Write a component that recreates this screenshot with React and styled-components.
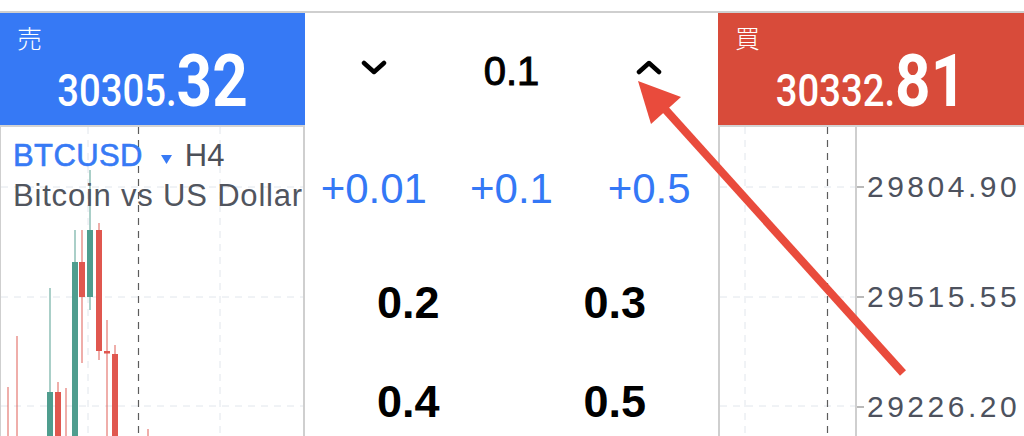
import React from "react";
import styled, { createGlobalStyle } from "styled-components";

const Global = createGlobalStyle`
  html, body { margin: 0; padding: 0; background: #fff; }
  body { font-family: "Liberation Sans", Arial, sans-serif; }
`;

const Page = styled.div`
  position: relative;
  width: 1024px;
  height: 436px;
  overflow: hidden;
  padding-top: 11px;
  box-sizing: border-box;
  background: #fff;
`;

const Frame = styled.div`
  display: grid;
  grid-template-columns: 305px 413px 1fr;
  grid-template-rows: 112px 1fr;
  height: 100%;
  border-top: 2px solid #cfcfcf;
  box-sizing: border-box;
`;

const QuoteBar = styled.div`
  grid-row: 1;
  grid-column: ${(p) => (p.$side === "sell" ? 1 : 3)};
  background: ${(p) => (p.$side === "sell" ? "#3679f5" : "#d84b3a")};
  color: #fff;
  padding-top: 12px;
  display: flex;
  flex-direction: column;
  overflow: hidden;
`;

const SideLabel = styled.div`
  margin-left: 17px;
  height: 26px;
  font: 300 25px/25px "Noto Sans CJK JP", "Noto Sans CJK SC", sans-serif;
`;

const Price = styled.div`
  display: flex;
  justify-content: center;
  align-items: baseline;
  line-height: 60px;
  font-family: Roboto, "Liberation Sans", sans-serif;
  transform: scaleX(0.85);
  transform-origin: center;
`;

const PriceMain = styled.span`
  font-size: 45px;
  font-weight: 500;
`;

const PricePips = styled.span`
  font-size: 73px;
  font-weight: 700;
`;

const Ticket = styled.div`
  grid-column: 2;
  grid-row: 1 / span 2;
  display: flex;
  flex-direction: column;
  background: #fff;
`;

const StepRow = styled.div`
  height: 112px;
  flex: none;
  display: grid;
  grid-template-columns: repeat(3, 1fr);
  align-items: center;
  justify-items: center;
`;

const StepButton = styled.div`
  display: flex;
  margin-bottom: 3px;
`;

const VolumeValue = styled.div`
  font: 400 40px/1 "Liberation Sans", Arial, sans-serif;
  -webkit-text-stroke: 1px #000;
  color: #000;
  padding-top: 4px;
`;

const QuickRow = styled.div`
  height: 128px;
  flex: none;
  display: grid;
  grid-template-columns: repeat(3, 1fr);
  align-items: center;
  justify-items: center;
`;

const QuickAdd = styled.div`
  font: 400 42px/1 "Liberation Sans", Arial, sans-serif;
  color: #3478f6;
`;

const PresetRow = styled.div`
  height: 99px;
  flex: none;
  display: grid;
  grid-template-columns: repeat(2, 1fr);
  align-items: center;
  justify-items: center;
`;

const Preset = styled.div`
  font: 700 45px/1 "Liberation Sans", Arial, sans-serif;
  color: #000;
`;

const Chart = styled.div`
  grid-row: 2;
  grid-column: ${(p) => (p.$side === "left" ? 1 : 3)};
  position: relative;
  overflow: hidden;
  border-top: 2px solid #d3d3d3;
  border-left: ${(p) => (p.$side === "left" ? "1px" : "2px")} solid #cfcfcf;
  border-right: ${(p) => (p.$side === "left" ? "2px solid #cfcfcf" : "0")};
  display: flex;
`;

const ChartCanvas = styled.svg`
  position: absolute;
  inset: 0;
  width: 100%;
  height: 100%;
`;

const Header = styled.div`
  position: relative;
  padding: 9px 0 0 12px;
  font-size: 31px;
  line-height: 40px;
  white-space: nowrap;
`;

const SymbolLine = styled.div`
  display: flex;
  align-items: baseline;
`;

const Symbol = styled.span`
  color: #377af5;
  letter-spacing: 0.4px;
  -webkit-text-stroke: 0.6px #377af5;
`;

const Caret = styled.svg`
  margin: 6px 13px 0 18px;
  align-self: center;
`;

const Timeframe = styled.span`
  color: #4c5059;
`;

const Description = styled.div`
  color: #51555e;
  letter-spacing: 0.8px;
`;

const Plot = styled.div`
  position: relative;
  flex: 1;
`;

const Axis = styled.div`
  width: 169px;
  flex: none;
  box-sizing: border-box;
  border-left: 2px solid #cfcfcf;
  padding-top: 5px;
  display: flex;
  flex-direction: column;
`;

const AxisRow = styled.div`
  height: 110px;
  flex: none;
  display: flex;
  align-items: center;
`;

const Tick = styled.span`
  width: 7px;
  height: 2px;
  background: #b9b9b9;
  margin-right: 3px;
`;

const AxisLabel = styled.span`
  font: 400 30px/1 "Liberation Sans", Arial, sans-serif;
  letter-spacing: 3.5px;
  color: #4d525e;
`;

const Overlay = styled.svg`
  position: absolute;
  left: 0;
  top: 0;
  pointer-events: none;
`;

const GREEN = "#4f9d8e";
const RED = "#e0574f";

const candles = [
  { x: 8, wick: [387, 440], color: RED },
  { x: 17, wick: [336, 440], color: RED },
  { x: 50, wick: [288, 440], body: [392, 440], color: GREEN },
  { x: 58, wick: [382, 440], body: [392, 440], color: RED },
  { x: 66, wick: [388, 440], color: RED },
  { x: 75, wick: [230, 440], body: [262, 440], color: GREEN },
  { x: 82, wick: [230, 363], body: [262, 297], color: RED },
  { x: 90, wick: [170, 310], body: [230, 297], color: GREEN },
  { x: 99, wick: [223, 360], body: [230, 351], color: RED },
  { x: 107, wick: [320, 440], body: [351, 353.5], color: RED },
  { x: 115, wick: [345, 440], body: [354, 440], color: RED },
  { x: 148, wick: [429, 440], color: RED },
];

const hLines = [187, 297, 406];

function Chevron({ up }) {
  return (
    <svg width="26" height="15" viewBox="0 0 26 15">
      <polyline
        points={up ? "3,12 13,3 23,12" : "3,3 13,12 23,3"}
        fill="none"
        stroke="#000"
        strokeWidth="4.5"
        strokeLinecap="round"
        strokeLinejoin="round"
      />
    </svg>
  );
}

function LeftCanvas() {
  return (
    <ChartCanvas viewBox="1 127 302 309" preserveAspectRatio="none">
      {hLines.map((y) => (
        <line key={y} x1="1" x2="303" y1={y} y2={y} stroke="#e1e6ec" strokeWidth="1" strokeDasharray="7 6" />
      ))}
      {[88, 220].map((x) => (
        <line key={x} x1={x} x2={x} y1="127" y2="436" stroke="#e1e6ec" strokeWidth="1" strokeDasharray="7 6" />
      ))}
      <line x1="138.5" x2="138.5" y1="127" y2="436" stroke="#5c5c5c" strokeWidth="1.2" strokeDasharray="7 6" />
      {candles.map((c, i) => (
        <g key={i}>
          <line x1={c.x} x2={c.x} y1={c.wick[0]} y2={c.wick[1]} stroke={c.color} strokeWidth="1.2" opacity="0.8" />
          {c.body && (
            <rect x={c.x - 3} y={c.body[0]} width="6" height={c.body[1] - c.body[0]} fill={c.color} />
          )}
        </g>
      ))}
    </ChartCanvas>
  );
}

function RightCanvas() {
  return (
    <ChartCanvas viewBox="720 127 135 309" preserveAspectRatio="none">
      {hLines.map((y) => (
        <line key={y} x1="720" x2="855" y1={y} y2={y} stroke="#e1e6ec" strokeWidth="1" strokeDasharray="7 6" />
      ))}
      <line x1="745" x2="745" y1="127" y2="436" stroke="#e1e6ec" strokeWidth="1" strokeDasharray="7 6" />
      <line x1="827.5" x2="827.5" y1="127" y2="436" stroke="#5c5c5c" strokeWidth="1.2" strokeDasharray="7 6" />
    </ChartCanvas>
  );
}

function Quote({ side, label, main, pips }) {
  return (
    <QuoteBar $side={side}>
      <SideLabel>{label}</SideLabel>
      <Price>
        <PriceMain>{main}</PriceMain>
        <PricePips>{pips}</PricePips>
      </Price>
    </QuoteBar>
  );
}

export default function App() {
  return (
    <>
      <Global />
      <Page>
        <Frame>
          <Quote side="sell" label="売" main="30305." pips="32" />
          <Ticket>
            <StepRow>
              <StepButton>
                <Chevron />
              </StepButton>
              <VolumeValue>0.1</VolumeValue>
              <StepButton>
                <Chevron up />
              </StepButton>
            </StepRow>
            <QuickRow>
              <QuickAdd>+0.01</QuickAdd>
              <QuickAdd>+0.1</QuickAdd>
              <QuickAdd>+0.5</QuickAdd>
            </QuickRow>
            <PresetRow>
              <Preset>0.2</Preset>
              <Preset>0.3</Preset>
            </PresetRow>
            <PresetRow>
              <Preset>0.4</Preset>
              <Preset>0.5</Preset>
            </PresetRow>
          </Ticket>
          <Quote side="buy" label="買" main="30332." pips="81" />
          <Chart $side="left">
            <LeftCanvas />
            <Header>
              <SymbolLine>
                <Symbol>BTCUSD</Symbol>
                <Caret width="11" height="9" viewBox="0 0 11 9">
                  <polygon points="0,0 11,0 5.5,9" fill="#377af5" />
                </Caret>
                <Timeframe>H4</Timeframe>
              </SymbolLine>
              <Description>Bitcoin vs US Dollar</Description>
            </Header>
          </Chart>
          <Chart $side="right">
            <Plot>
              <RightCanvas />
            </Plot>
            <Axis>
              {["29804.90", "29515.55", "29226.20"].map((v) => (
                <AxisRow key={v}>
                  <Tick />
                  <AxisLabel>{v}</AxisLabel>
                </AxisRow>
              ))}
            </Axis>
          </Chart>
        </Frame>
        <Overlay width="1024" height="436" viewBox="0 0 1024 436">
          <line x1="664" y1="108" x2="903" y2="373" stroke="#e94b3c" strokeWidth="8" />
          <polygon points="638,81 681,97 651,124" fill="#e94b3c" />
        </Overlay>
      </Page>
    </>
  );
}
